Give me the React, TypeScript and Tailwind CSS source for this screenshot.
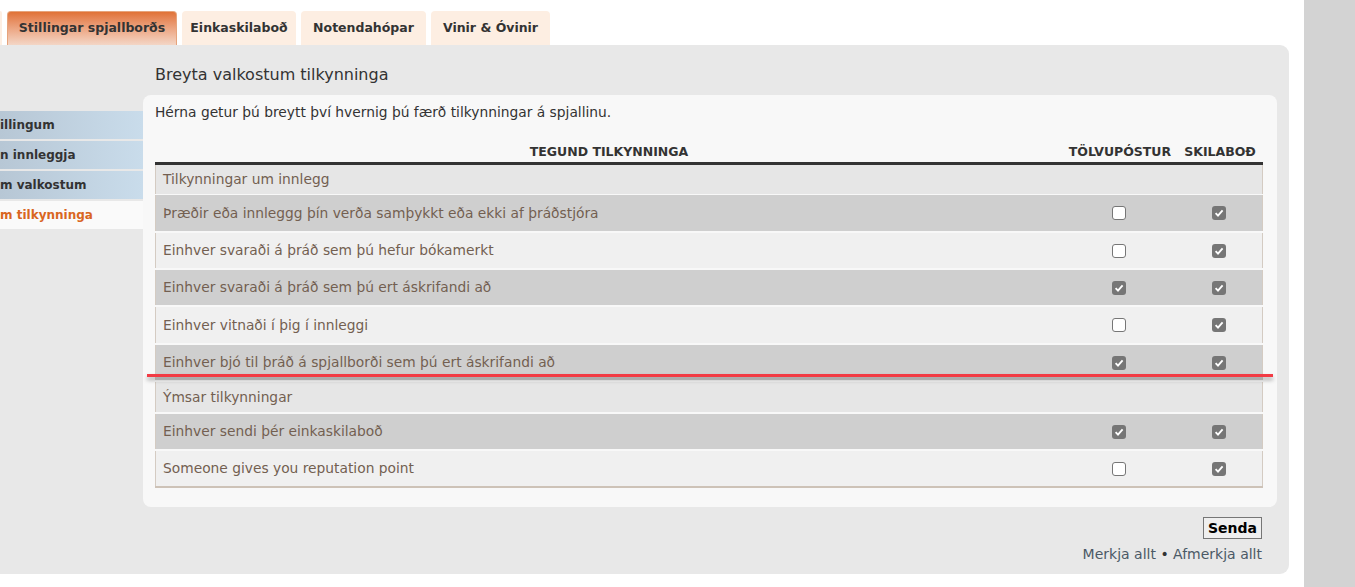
const tabs = [
  { label: "Stillingar spjallborðs", active: true, w: "w-[170px]" },
  { label: "Einkaskilaboð", active: false, w: "w-[114px]" },
  { label: "Notendahópar", active: false, w: "w-[125px]" },
  { label: "Vinir & Óvinir", active: false, w: "w-[119px]" },
];

const navItems = [
  { label: "illingum", active: false },
  { label: "n innleggja", active: false },
  { label: "m valkostum", active: false },
  { label: "m tilkynninga", active: true },
];

type Row =
  | { kind: "section"; label: string; h: string }
  | { kind: "item"; label: string; email: boolean; pm: boolean; h: string };

const rows: Row[] = [
  { kind: "section", label: "Tilkynningar um innlegg", h: "h-[29px] mb-[1px]" },
  { kind: "item", label: "Þræðir eða innleggg þín verða samþykkt eða ekki af þráðstjóra", email: false, pm: true, h: "h-[36px]" },
  { kind: "item", label: "Einhver svaraði á þráð sem þú hefur bókamerkt", email: false, pm: true, h: "h-[35px]" },
  { kind: "item", label: "Einhver svaraði á þráð sem þú ert áskrifandi að", email: true, pm: true, h: "h-[35px]" },
  { kind: "item", label: "Einhver vitnaði í þig í innleggi", email: false, pm: true, h: "h-[36px]" },
  { kind: "item", label: "Einhver bjó til þráð á spjallborði sem þú ert áskrifandi að", email: true, pm: true, h: "h-[35px]" },
  { kind: "section", label: "Ýmsar tilkynningar", h: "h-[30px] mb-[2px]" },
  { kind: "item", label: "Einhver sendi þér einkaskilaboð", email: true, pm: true, h: "h-[35px]" },
  { kind: "item", label: "Someone gives you reputation point", email: false, pm: true, h: "h-[35px]" },
];

const Check = ({ on }: { on: boolean }) =>
  on ? (
    <span className="w-[14px] h-[14px] rounded-[3px] bg-[#767676] flex items-center justify-center">
      <svg width="10" height="10" viewBox="0 0 10 10">
        <path d="M1.6 5.2 L4 7.6 L8.6 2.4" fill="none" stroke="#fff" strokeWidth="1.9" />
      </svg>
    </span>
  ) : (
    <span className="w-[14px] h-[14px] rounded-[3px] bg-white border border-[#767676]" />
  );

export default function App() {
  let dark = false;
  return (
    <div className="min-h-screen bg-white flex text-[#333]" style={{ fontFamily: '"DejaVu Sans", Verdana, sans-serif' }}>
      <div className="w-[1304px] h-[587px]">
        {/* tabs */}
        <div className="flex items-end gap-[5px] pt-[11px] h-[45px]">
          <div className="w-[2px] h-[34px] bg-[#fdeee2] rounded-tr-[4px]" />
          {tabs.map((t) => (
            <div
              key={t.label}
              className={`${t.w} h-[34px] rounded-t-[4px] flex items-center justify-center text-[12.5px] font-bold ${
                t.active
                  ? "bg-gradient-to-b from-[#e07236] to-[#f3d6c6] border-t border-x border-[#e6a47c]"
                  : "bg-[#fdeee2]"
              }`}
            >
              {t.label}
            </div>
          ))}
        </div>

        {/* panel */}
        <div className="w-[1289px] h-[529px] bg-[#e8e8e8] rounded-r-[9px] flex flex-col">
          <h2 className="pl-[155px] pt-[17px] h-[50px] text-[16px] leading-[26px]">Breyta valkostum tilkynninga</h2>

          <div className="flex">
            {/* left nav */}
            <div className="w-[143px] pt-[16px] flex flex-col gap-[2px] overflow-hidden">
              {navItems.map((n) => (
                <div
                  key={n.label}
                  className={`h-[28px] flex items-center text-[12px] font-bold whitespace-nowrap ${
                    n.active ? "bg-[#fafafa] text-[#d9661f]" : "bg-gradient-to-r from-[#b7c7d5] to-[#c9dceb] text-[#333]"
                  }`}
                >
                  {n.label}
                </div>
              ))}
            </div>

            {/* card */}
            <div className="relative w-[1134px] h-[412px] bg-[#f8f8f8] rounded-[8px] px-[12px] pt-[8px]">
              <p className="text-[13.8px] leading-[18px]">Hérna getur þú breytt því hvernig þú færð tilkynningar á spjallinu.</p>

              <div className="mt-[21px] w-[1108px]">
                <div className="grid grid-cols-[908px_114px_86px] h-[23px] items-center text-[12.5px] font-bold border-b-[3px] border-[#333]">
                  <div className="text-center">TEGUND TILKYNNINGA</div>
                  <div className="text-center">TÖLVUPÓSTUR</div>
                  <div className="text-center">SKILABOÐ</div>
                </div>
                <div className="border-b-2 border-[#cdc2b7]">
                  {rows.map((r, i) => {
                    if (r.kind === "section") {
                      dark = false;
                      return (
                        <div
                          key={i}
                          className={`${r.h} bg-[#e6e6e6] border-x border-[#d4cbc2] flex items-center px-[7px] text-[13.8px] text-[#735f51]`}
                        >
                          {r.label}
                        </div>
                      );
                    }
                    dark = !dark;
                    return (
                      <div
                        key={i}
                        className={`grid grid-cols-[906px_114px_86px] ${r.h} items-center border-x border-[#d4cbc2] text-[13.8px] text-[#735f51] ${
                          i === rows.length - 1 ? "" : "mb-[2px]"
                        } ${dark ? "bg-[#cfcfcf]" : "bg-[#f0f0f0]"}`}
                      >
                        <div className="px-[7px] whitespace-nowrap">{r.label}</div>
                        <div className="flex justify-center">
                          <Check on={r.email} />
                        </div>
                        <div className="flex justify-center">
                          <Check on={r.pm} />
                        </div>
                      </div>
                    );
                  })}
                </div>
              </div>

              <div className="absolute left-[4px] top-[279px] w-[1126px] h-[3px] bg-[#f23b44] shadow-[0_3px_4px_rgba(0,0,0,0.35)]" />
            </div>
          </div>

          <div className="w-[1262px] flex flex-col items-end">
            <button
              type="button"
              className="mt-[10px] h-[22px] px-[4px] border border-[#767676] bg-[#efefef] text-[14px] font-bold text-black leading-none"
            >
              Senda
            </button>
            <div className="mt-[5px] text-[14px] text-[#4b5966]">
              Merkja allt <span className="text-[#333]">•</span> Afmerkja allt
            </div>
          </div>
        </div>
      </div>
      <div className="w-[51px] bg-[#d3d3d3]" />
    </div>
  );
}
